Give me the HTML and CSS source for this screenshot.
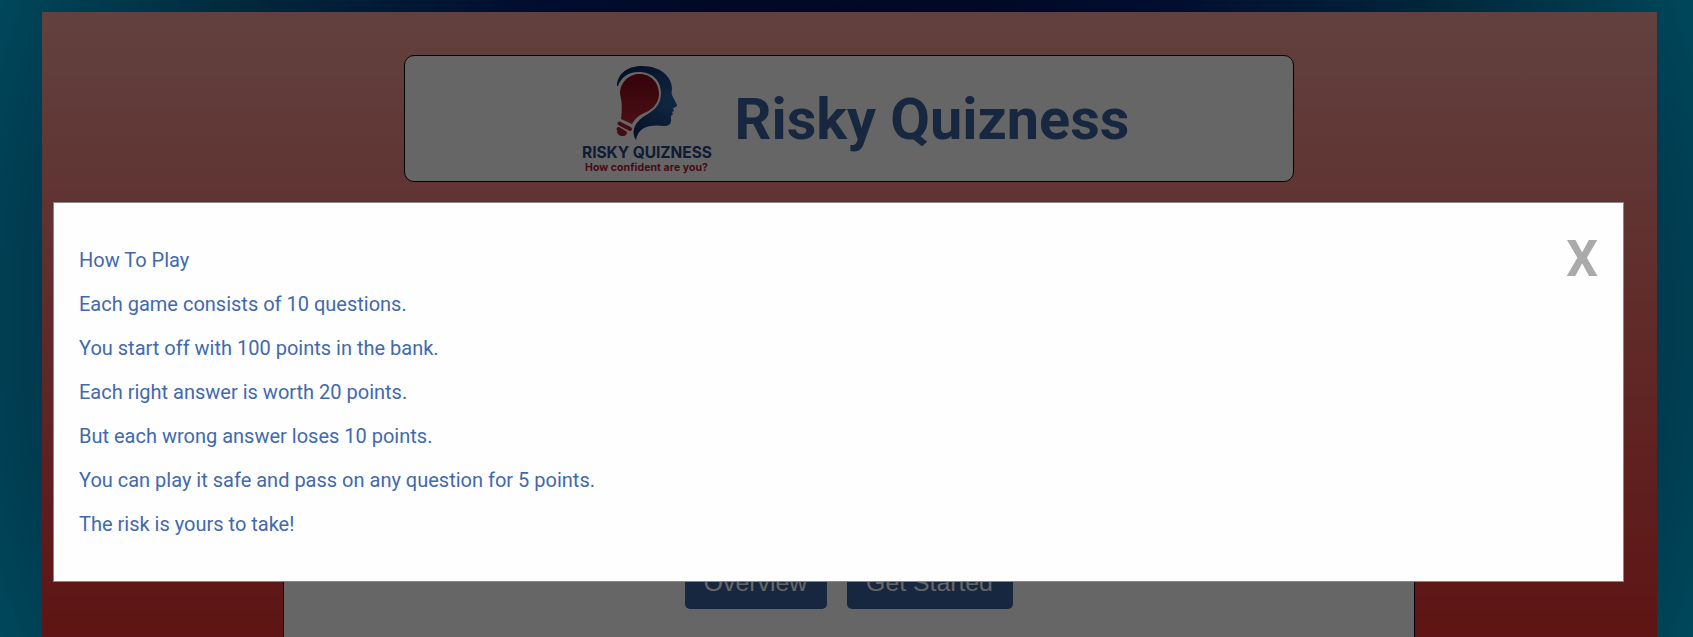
FILE: index.html
```html
<!DOCTYPE html>
<html lang="en">
<head>
<meta charset="utf-8">
<title>Risky Quizness</title>
<link rel="stylesheet" href="styles.css">
</head>
<body>
<main class="page">
  <header class="banner">
    <svg class="logo" viewBox="0 0 160 125" width="160" height="125">
      <defs>
        <radialGradient id="face" gradientUnits="userSpaceOnUse" cx="100" cy="46" r="48"><stop offset="0" stop-color="#2a62a4"/><stop offset="1" stop-color="#112c62"/></radialGradient>
        <linearGradient id="bulb" x1="0" y1="0" x2="0" y2="1"><stop offset="0" stop-color="#840818"/><stop offset="1" stop-color="#bc2438"/></linearGradient>
      </defs>
      <path fill="url(#face)" d="M47 31C47 20 56 11 72 11C91 11 102 22 102 34L101.500 38Q102 41 104 44L107 50Q107 52 103 53L104 56L102 57L103 59L101 61V66Q101 71 94 71C80 69 68 72 66 85C61 78 64 68 73 62C83 56 91 51 91 38C91 27 84 18 71 17C59 16 51 22 48 31Z"/>
      <path fill="url(#bulb)" d="M50 39C50 27 59 19 70 19C81 19 89 28 89 39C89 50 80 56 72 59Q66 62 62 69L51 64Q53 50 50 39Z"/>
      <path d="M49.500 68.500 60 74M48.500 74 55 78" stroke="#b02035" stroke-width="4" stroke-linecap="round"/>
      <path d="M48.500 77Q50 80 54 79.500" fill="none" stroke="#b02035" stroke-width="3" stroke-linecap="round"/>
      <text class="logo-name" x="12" y="103" textLength="130" lengthAdjust="spacing">RISKY QUIZNESS</text>
      <text class="logo-tag" x="15" y="116" textLength="123" lengthAdjust="spacing">How confident are you?</text>
    </svg>
    <h1 class="title">Risky Quizness</h1>
  </header>
  <section class="panel">
    <button class="button overview">Overview</button>
    <button class="button start">Get Started</button>
  </section>
</main>
<div class="overlay">
  <div class="modal">
    <div class="rules">
      <p>How To Play</p>
      <p>Each game consists of 10 questions.</p>
      <p>You start off with 100 points in the bank.</p>
      <p>Each right answer is worth 20 points.</p>
      <p>But each wrong answer loses 10 points.</p>
      <p>You can play it safe and pass on any question for 5 points.</p>
      <p>The risk is yours to take!</p>
    </div>
    <span class="close">X</span>
  </div>
</div>
</body>
</html>
```
FILE: styles.css
```css
* { box-sizing: border-box; }
body {
  margin: 0;
  height: 637px;
  padding: 12px 36px 0 42px;
  overflow: hidden;
  font-family: Roboto, sans-serif;
  background: radial-gradient(circle, rgb(2, 0, 36) 0%, rgb(5, 20, 92) 35%, rgb(4, 36, 118) 50%, rgb(0, 100, 150) 75%, rgb(0, 178, 228) 100%);
}
.page {
  width: 1615px;
  height: 625px;
  padding: 43px 1px 0 0;
  display: flex;
  flex-direction: column;
  align-items: center;
  background: linear-gradient(rgb(243, 163, 158), rgb(235, 52, 50));
}
.banner {
  width: 890px;
  height: 127px;
  flex: none;
  display: flex;
  margin-left: -1px;
  padding-left: 165px;
  border: 1px solid #000;
  border-radius: 10px;
  background: #fff;
}
.logo { flex: none; margin-top: -1px; }
.logo-name { font: 700 15.500px Inter, sans-serif; fill: #23488c; }
.logo-tag { font: 700 10.500px Inter, sans-serif; fill: #b02035; }
.title {
  margin: 30px 0 0 5px;
  font-size: 57.600px;
  line-height: 68px;
  font-weight: 700;
  color: #37629f;
  white-space: nowrap;
}
.panel {
  width: 1132px;
  flex: 1;
  margin: 20px 0 0 -1px;
  display: flex;
  align-items: flex-end;
  justify-content: center;
  gap: 20px;
  padding-bottom: 28px;
  border: 1px solid #000;
  border-bottom: 0;
  border-radius: 10px 10px 0 0;
  background: #fff;
}
.button {
  height: 52px;
  padding: 0;
  border: 0;
  border-radius: 5px;
  background: #37629f;
  color: #fff;
  font: 24.800px "Liberation Sans", sans-serif;
}
.overview { width: 142px; }
.start { width: 166px; }
.overlay {
  position: fixed;
  inset: 0;
  padding: 202px 69px 0 53px;
  background: rgba(0, 0, 0, 0.6);
}
.modal {
  height: 380px;
  display: flex;
  justify-content: space-between;
  padding: 45px 25px;
  border: 1px solid #888;
  background: #fefefe;
}
.rules p {
  margin: 0 0 20px;
  font-size: 20px;
  line-height: 24px;
  color: #4169ae;
}
.close {
  font-size: 50px;
  line-height: 22px;
  font-weight: 700;
  color: #aaa;
}
```
